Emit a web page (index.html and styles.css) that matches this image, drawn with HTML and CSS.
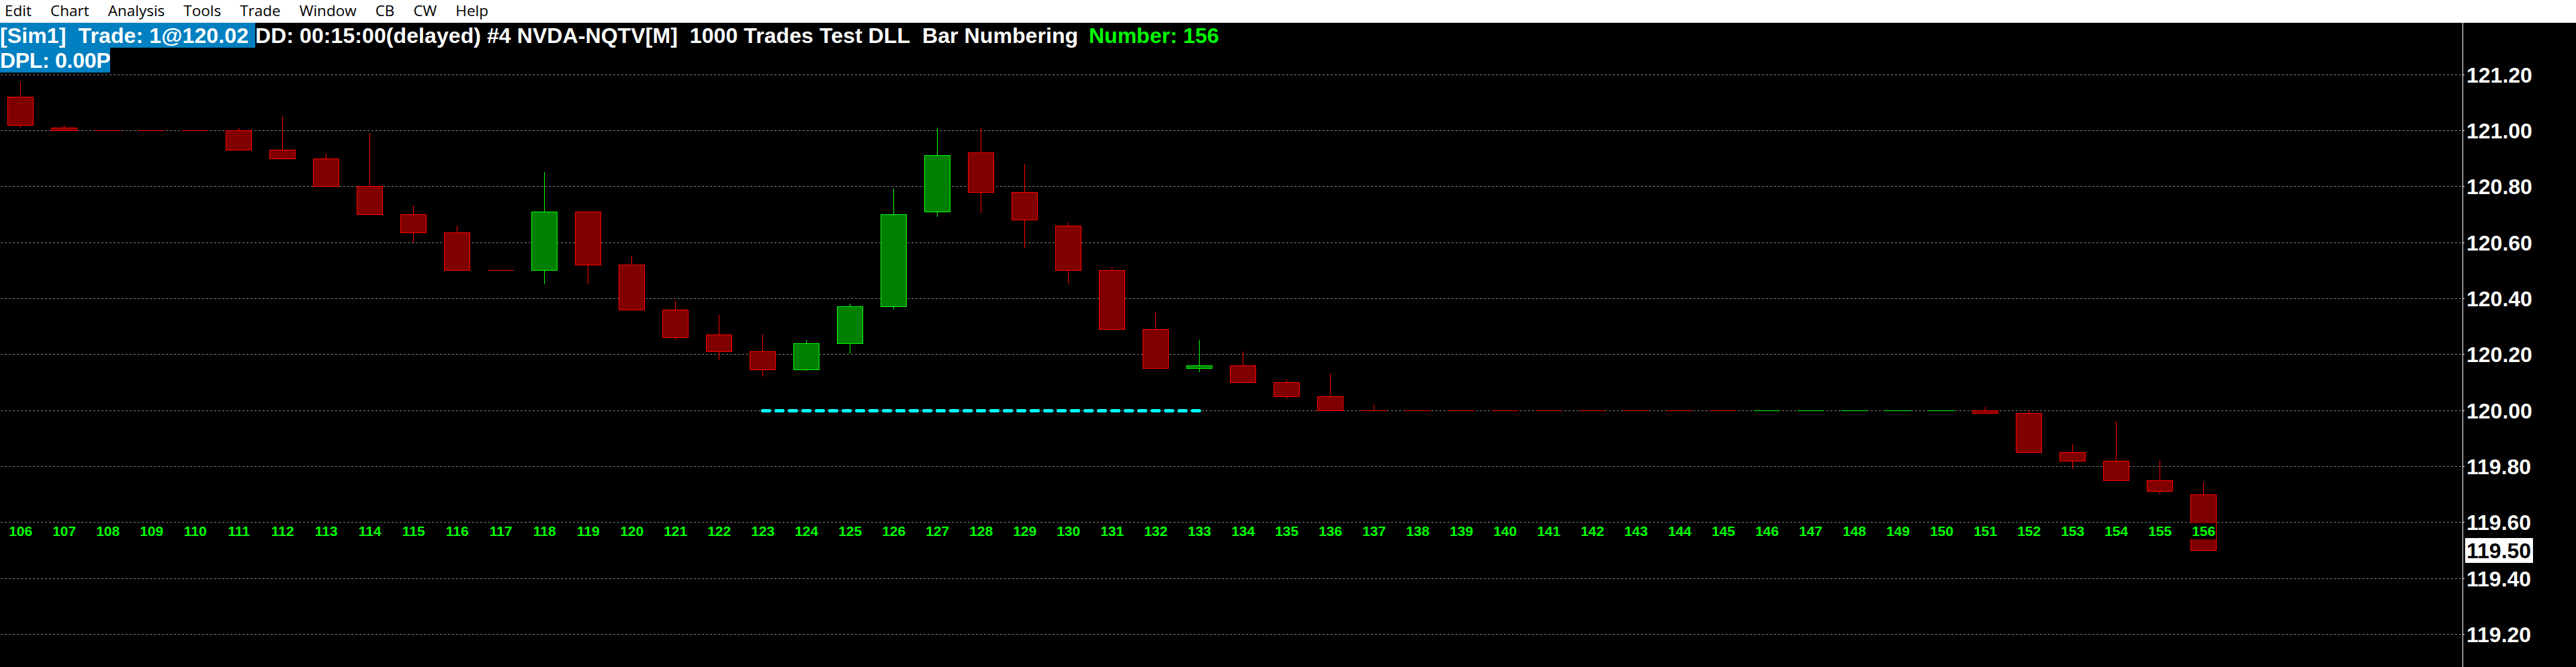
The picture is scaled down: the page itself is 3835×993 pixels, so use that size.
FILE: index.html
```html
<!DOCTYPE html>
<html lang="en">
<head>
<meta charset="utf-8">
<title>NVDA Chart</title>
<link rel="stylesheet" href="styles.css">
</head>
<body>
<nav class="menu"><span>Edit</span><span>Chart</span><span>Analysis</span><span>Tools</span><span>Trade</span><span>Window</span><span>CB</span><span>CW</span><span>Help</span></nav>
<main class="chart">
<svg class="plot" width="3835" height="959" viewBox="0 34 3835 959" shape-rendering="crispEdges" id="plot"></svg>
<header class="info"><div class="line"><span class="hl account">[Sim1]&nbsp; Trade: 1@120.02 </span><span class="sym">DD: 00:15:00(delayed) #4 NVDA-NQTV[M]&nbsp; 1000 Trades Test DLL&nbsp; Bar Numbering&nbsp; </span><span class="num">Number: 156</span></div><div class="line"><span class="hl pnl">DPL: 0.00P</span></div></header>
</main>
<script src="chart.js"></script>
</body>
</html>
```
FILE: styles.css
```css
* { box-sizing: border-box; }
body { margin: 0; width: 3835px; height: 993px; background: #000; overflow: hidden; display: flex; flex-direction: column; }
.menu { height: 34px; flex: none; background: #fff; border-bottom: 2px solid #f0f0f0; display: flex; gap: 28px; padding-left: 7px; font: 22.5px/31px "Open Sans", "Noto Sans", sans-serif; color: #000; }
.chart { position: relative; flex: 1; }
.plot { display: block; }
.info { position: absolute; left: 0; top: 0; font: bold 32px/39px "Liberation Sans", Arial, sans-serif; color: #fff; white-space: pre; }
.line { display: flex; height: 37px; }
.hl { background: #0080c0; }
.account { width: 380px; letter-spacing: 0.12px; }
.sym { width: 1241px; letter-spacing: 0.08px; }
.pnl { width: 164px; letter-spacing: -0.3px; }
.num { color: #0f0; }
.grid { stroke: #808080; stroke-dasharray: 3 3; }
.axis { fill: #fff; }
.price { font: bold 32px "Liberation Sans", Arial, sans-serif; fill: #fff; }
.price-last { fill: #000; }
.label { font: bold 21px "Liberation Sans", Arial, sans-serif; fill: #0f0; text-anchor: middle; }
.mask { fill: #000; }
.down { fill: #800000; stroke: #f00; }
.up { fill: #008000; stroke: #0f0; }
.level { stroke: #0ff; stroke-width: 5; stroke-dasharray: 13 7; }
.level-core { stroke: #0ff; stroke-width: 3; stroke-dasharray: 15 5; }
```
FILE: chart.js
```js
// Each bar: [direction, body top, body bottom, wick top, wick end]
const flat = (d, y) => [d, y, y, y, y];
const bars = [
  ['d',144,186,123,190], ['d',190,194,186,194], flat('d',194), flat('d',194), flat('d',194),
  ['d',194,223,190,223], ['d',223,236,173,236], ['d',236,277,229,277], ['d',277,319,198,319],
  ['d',319,346,306,361], ['d',346,402,336,402], flat('d',402), ['u',315,402,256,423],
  ['d',315,394,315,423], ['d',394,461,381,461], ['d',461,502,448,506], ['d',498,523,469,536],
  ['d',523,550,498,561], ['u',511,550,506,552], ['u',456,511,452,527], ['u',319,456,281,461],
  ['u',231,315,190,323], ['d',227,286,190,317], ['d',286,327,244,369], ['d',336,402,331,423],
  ['d',402,490,398,490], ['d',490,548,465,548], ['u',544,548,506,554], ['d',544,569,523,569],
  ['d',569,590,565,594], ['d',590,611,556,611], ['d',611,611,602,611],
  ...Array(8).fill(flat('d',611)), ...Array(5).fill(flat('u',611)),
  ['d',611,615,606,615], ['d',615,673,611,673], ['d',673,686,661,698], ['d',686,715,627,715],
  ['d',715,731,686,736], ['d',736,819,719,819]
];
const prices = { 111:'121.20', 194:'121.00', 277:'120.80', 361:'120.60', 444:'120.40', 527:'120.20', 611:'120.00', 694:'119.80', 777:'119.60', 861:'119.40', 944:'119.20' };
let s = '';
for (const y in prices) {
  s += `<path class="grid" d="M1 ${+y + .5}H3666"/>`;
  s += `<rect class="axis" x="3667" y="${y}" width="2" height="1"/>`;
  s += `<text class="price" x="3672" y="${+y + 12}">${prices[y]}</text>`;
}
s += '<rect class="axis" x="3666" y="34" width="1" height="959"/>';
s += '<rect class="axis" x="3670" y="801" width="101" height="37"/><text class="price price-last" x="3672" y="831">119.50</text>';
bars.forEach(([d, top, bottom, high, end], i) => {
  const x = 30 + 65 * i;
  s += `<g class="${d === 'd' ? 'down' : 'up'}">`;
  if (end > high) s += `<path d="M${x + .5} ${high}V${end}"/>`;
  s += bottom > top ? `<rect x="${x - 18.5}" y="${top + .5}" width="38" height="${bottom - top}"/>` : `<path d="M${x - 19} ${top + .5}h39"/>`;
  s += '</g>';
});
s += '<path class="level" d="M1134 611.5H1788"/><path class="level-core" d="M1133 611.5H1789"/>';
bars.forEach((b, i) => {
  const x = 30 + 65 * i;
  if (i === 50) s += `<rect class="mask" x="${x - 19}" y="779" width="38" height="24"/>`;
  s += `<text class="label" x="${x + .7}" y="798">${106 + i}</text>`;
});
document.getElementById('plot').innerHTML = s;
```
